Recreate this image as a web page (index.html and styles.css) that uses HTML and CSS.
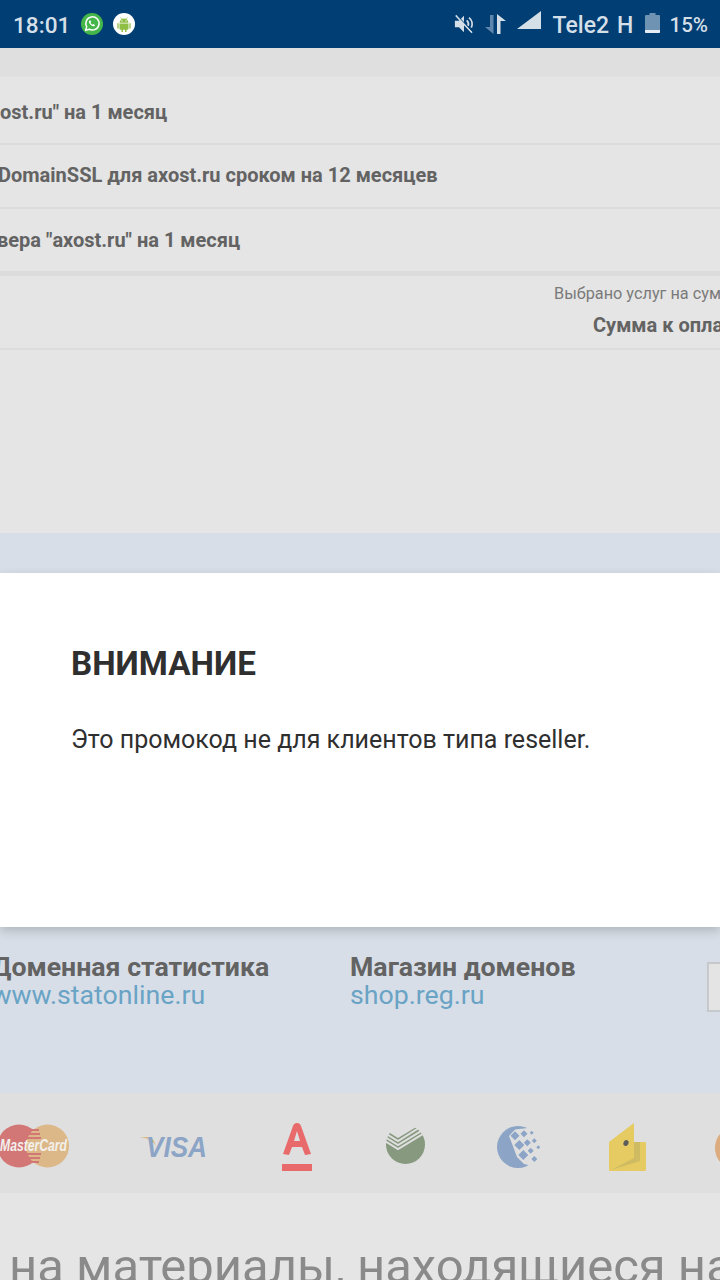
FILE: index.html
```html
<!DOCTYPE html>
<html lang="ru">
<head>
    <meta charset="UTF-8">
    <meta name="viewport" content="width=device-width, initial-scale=1.0">
    <title>Внимание</title>
    <link rel="stylesheet" href="styles.css">
</head>
<body>
    <div class="status-bar">
        <div class="status-left">
            <span class="clock">18:01</span>
            <svg class="notif notif-wa" viewBox="0 0 22 22"><circle cx="11" cy="11" r="11" fill="#45b74a"/><path d="M4.600 17.400l1.100-3.700a6.600 6.600 0 1 1 2.500 2.500z" fill="none" stroke="#fff" stroke-width="1.500" stroke-linejoin="round"/><path d="M8.600 7.400c-.9.600-.9 1.900.1 3.400 1.100 1.600 2.600 2.600 3.900 2.500.9-.1 1.500-.8 1.300-1.400l-1.600-.8-.7.7c-.9-.4-1.700-1.200-2.100-2.100l.6-.7-.7-1.700z" fill="#fff"/></svg>
            <svg class="notif notif-android" viewBox="0 0 22 22"><circle cx="11" cy="11" r="11" fill="#fff"/><path d="M6.500 9.700a4.500 4.300 0 0 1 9 0z" fill="#8fbe45"/><path d="M6.500 10.400h9v5.400a1 1 0 0 1-1 1h-1v2.200h-1.500v-2.200h-2v2.200H8.500v-2.200h-1a1 1 0 0 1-1-1z" fill="#8fbe45"/><path d="M5 10.700v4.300M17 10.700v4.300" stroke="#8fbe45" stroke-width="1.300" stroke-linecap="round"/><path d="M8.500 5.900L7.700 4.400M13.500 5.900l.8-1.500" stroke="#8fbe45" stroke-width=".7"/><circle cx="9" cy="7.900" r=".6" fill="#fff"/><circle cx="13" cy="7.900" r=".6" fill="#fff"/></svg>
        </div>
        <div class="status-right">
            <svg class="sys-icon icon-mute" width="20" height="20" viewBox="0 0 22 22"><path d="M1 7.500h4.500l5.500-5.500v18l-5.500-5.500H1z" fill="#d5dfe8"/><path d="M14 7a5.500 5.500 0 0 1 1.500 6M16.500 4a9 9 0 0 1 2.500 11" fill="none" stroke="#d5dfe8" stroke-width="2"/><path d="M2 1.500l18 19" stroke="#d5dfe8" stroke-width="2"/><path d="M3.500 1.500l18 19" stroke="#003e73" stroke-width="1"/></svg>
            <svg class="sys-icon icon-arrows" width="21" height="20" viewBox="0 0 21 20"><path d="M5 1h3.500v19L0 13h5z" fill="#5f87ad"/><path d="M12 0l9 7h-5.500v13H12z" fill="#d5dfe8"/></svg>
            <svg class="sys-icon icon-signal" width="24" height="18" viewBox="0 0 24 18"><path d="M0 18L24 0v18z" fill="#d5dfe8"/></svg>
            <span class="carrier">Tele2</span>
            <span class="net">H</span>
            <svg class="sys-icon icon-battery" width="15" height="20" viewBox="0 0 15 20"><path d="M4.500 0h6v2h3.500a1 1 0 0 1 1 1v16a1 1 0 0 1-1 1H1a1 1 0 0 1-1-1V3a1 1 0 0 1 1-1h3.500z" fill="#6f93b3"/><path d="M0 17h15v2a1 1 0 0 1-1 1H1a1 1 0 0 1-1-1z" fill="#e6ecf1"/></svg>
            <span class="level">15%</span>
        </div>
    </div>

    <div class="top-strip"></div>

    <div class="order-list">
        <div class="order-row row-a">ost.ru" на 1 месяц</div>
        <div class="order-row row-b">DomainSSL для axost.ru сроком на 12 месяцев</div>
        <div class="order-row row-c">вера "axost.ru" на 1 месяц</div>
    </div>

    <div class="summary">
        <div class="summary-line">Выбрано услуг на сумму</div>
        <div class="summary-total">Сумма к оплате</div>
    </div>

    <div class="blank"></div>
    <div class="blue-gap"></div>

    <div class="modal">
        <h2 class="modal-title">ВНИМАНИЕ</h2>
        <p class="modal-text">Это промокод не для клиентов типа reseller.</p>
    </div>

    <div class="footer-links">
        <div class="link-col col-stat">
            <div class="link-title">Доменная статистика</div>
            <a class="link-url">www.statonline.ru</a>
        </div>
        <div class="link-col col-shop">
            <div class="link-title">Магазин доменов</div>
            <a class="link-url">shop.reg.ru</a>
        </div>
        <div class="cut-box"></div>
    </div>

    <div class="payments">
        <svg class="pay pay-mc" width="72" height="44" viewBox="0 0 72 44">
            <circle cx="19" cy="22" r="21.500" fill="#d27676"/>
            <circle cx="47.500" cy="22" r="21.500" fill="#dcb888"/>
            <path d="M29 6h10M27 10h13M27 14h14M27 30h14M27 34h13M29 38h10" stroke="#d27676" stroke-width="2"/>
            <text x="0" y="27" class="mc-text" textLength="67" lengthAdjust="spacingAndGlyphs">MasterCard</text>
        </svg>
        <svg class="pay pay-visa" width="68" height="24" viewBox="0 0 68 24">
            <path d="M0 1h8q6 1 8 9Q12 3 0 1z" fill="#dcb888"/>
            <text x="6" y="21" class="visa-text" textLength="61" lengthAdjust="spacingAndGlyphs">VISA</text>
        </svg>
        <svg class="pay pay-alfa" width="32" height="48" viewBox="0 0 32 48">
            <path d="M2 31L12 3q1-3 4-3t4 3l10 28-6 1-3-8H11l-3 8zM13 18h6l-3-10z" fill="#e96a6a" fill-rule="evenodd"/>
            <rect x="1" y="41" width="30" height="7" fill="#e96a6a"/>
        </svg>
        <svg class="pay pay-sber" width="41" height="38" viewBox="0 0 41 38">
            <circle cx="20.500" cy="18.500" r="19.500" fill="#87997f"/>
            <path d="M0 0v4l13 8L33 0z" fill="#dfdfdf"/>
            <path d="M0 7l13 8L37 0M0 11l13 8L41 2M0 15l13 8L41 6" fill="none" stroke="#dfdfdf" stroke-width="2"/>
        </svg>
        <svg class="pay pay-wm" width="44" height="42" viewBox="0 0 44 42">
            <circle cx="21" cy="21" r="21" fill="#8ca5c6"/>
            <path d="M12 10l6-6.500 9-1L44 0v42l-17-4-7-7-4.500-12z" fill="#dfdfdf"/>
            <path d="M18 5.200l4.500 4.500L18 14.200l-4.500-4.500zM27 4.200l3.500 3.500-3.500 3.500-3.500-3.500zM34.700 4.700l2 2-2 2-2-2zM22.300 14l5 5-5 5-5-5zM30.300 13.200l3.500 3.500-3.500 3.500-3.500-3.500zM37.300 12.200l2.500 2.500-2.500 2.500-2.500-2.500zM26.300 24l5 5-5 5-5-5zM33.700 21.700l3 3-3 3-3-3zM41.300 19.300l2 2-2 2-2-2zM37.300 30l3 3-3 3-3-3z" fill="#8ca5c6"/>
        </svg>
        <svg class="pay pay-yandex" width="37" height="48" viewBox="0 0 37 48">
            <path d="M1 48a1 1 0 0 1-1-1V19L25 0v19h11a1 1 0 0 1 1 1v27a1 1 0 0 1-1 1z" fill="#e6cb63"/>
            <path d="M2 47l23-12V19h6v19z" fill="#cfbb62"/>
            <ellipse cx="17" cy="20" rx="2.500" ry="3" fill="#5d5d5d" transform="rotate(25 17 20)"/>
        </svg>
        <div class="pay-cut"></div>
    </div>

    <div class="notice">на материалы, находящиеся на</div>
</body>
</html>
```

FILE: styles.css
```css
html, body {
    margin: 0;
    padding: 0;
}
body {
    width: 720px;
    height: 1280px;
    overflow: hidden;
    font-family: Roboto, "Noto Sans", sans-serif;
    background-color: #e5e5e5;
}
.status-bar {
    height: 48px;
    background-color: #003e73;
    display: flex;
    justify-content: space-between;
    align-items: center;
    color: #d5dfe8;
    font-weight: 500;
}
.status-left {
    display: flex;
    align-items: center;
    padding-left: 13px;
}
.clock {
    font-size: 22.6px;
    margin: 2px 11px 0 0;
}
.notif {
    width: 22px;
    height: 22px;
}
.notif-wa {
    margin-right: 10px;
}
.status-right {
    display: flex;
    align-items: center;
    padding-right: 12px;
    font-size: 23px;
}
.sys-icon {
    flex-shrink: 0;
}
.icon-mute {
    margin-right: 11px;
}
.icon-arrows {
    margin-right: 11px;
}
.icon-signal {
    margin: 0 12px 8px 0;
}
.carrier {
    margin-top: 2px;
}
.net {
    margin: 2px 12px 0 8px;
}
.icon-battery {
    margin-bottom: 2px;
}
.level {
    font-size: 20.6px;
    margin: 2px 0 0 9px;
}
.top-strip {
    height: 28px;
    background-color: #dfdfdf;
    border-bottom: 1px solid #e1e1e1;
}
.order-row {
    display: flex;
    align-items: center;
    font-size: 20px;
    font-weight: 700;
    color: #636363;
    white-space: nowrap;
    border-bottom: 2px solid #dcdcdc;
}
.row-a {
    height: 62px;
    padding-top: 4px;
}
.row-b {
    height: 60px;
    padding-bottom: 2px;
    text-indent: -2px;
}
.row-c {
    height: 62px;
    border-bottom: none;
    text-indent: -3px;
}
.summary {
    height: 72px;
    border-top: 5px solid #dcdcdc;
    border-bottom: 2px solid #dcdcdc;
    display: flex;
    flex-direction: column;
    align-items: flex-start;
    padding-left: 554px;
    white-space: nowrap;
    overflow: hidden;
}
.summary-line {
    font-size: 16.3px;
    color: #7a7a7a;
    margin-top: 8px;
}
.summary-total {
    font-size: 20px;
    font-weight: 700;
    color: #636363;
    margin: 10px 0 0 39px;
}
.blank {
    height: 183px;
}
.blue-gap {
    height: 40px;
    background-color: #d8dee7;
}
.modal {
    position: relative;
    height: 354px;
    box-sizing: border-box;
    padding: 71px 71px 0;
    background-color: #fff;
    box-shadow: 0 4px 10px rgba(0, 0, 0, 0.18);
    color: #2f2f2f;
}
.modal-title {
    margin: 0;
    font-size: 33.2px;
    line-height: 40px;
    font-weight: 700;
}
.modal-text {
    margin: 40px 0 0;
    font-size: 25px;
    line-height: 32px;
}
.footer-links {
    height: 166px;
    background-color: #d8dee7;
    display: flex;
    align-items: flex-start;
    white-space: nowrap;
}
.link-col {
    padding-top: 26px;
    flex-shrink: 0;
}
.col-stat {
    width: 358.5px;
    margin-left: -8.5px;
}
.col-shop {
    width: 357px;
}
.link-title {
    font-size: 26.7px;
    line-height: 28px;
    font-weight: 700;
    color: #636363;
}
.link-url {
    display: block;
    font-size: 26.7px;
    line-height: 28px;
    color: #69a3c5;
}
.cut-box {
    flex-shrink: 0;
    width: 20px;
    height: 50px;
    margin-top: 35px;
    box-sizing: border-box;
    border: 2px solid #c6c9cc;
    background-color: #e4e4e4;
}
.payments {
    height: 100px;
    background-color: #dfdfdf;
    display: flex;
    align-items: flex-start;
    overflow: hidden;
}
.pay {
    flex-shrink: 0;
}
.pay-mc {
    margin-top: 31px;
}
.mc-text {
    font-family: "Liberation Sans", sans-serif;
    font-size: 16px;
    font-weight: 700;
    font-style: italic;
    fill: #f3f0ec;
}
.pay-visa {
    margin: 43px 0 0 68px;
}
.visa-text {
    font-family: "Liberation Sans", sans-serif;
    font-size: 29px;
    font-weight: 700;
    font-style: italic;
    fill: #8ca5c6;
}
.pay-alfa {
    margin: 30px 0 0 73px;
}
.pay-sber {
    margin: 33px 0 0 72px;
}
.pay-wm {
    margin: 33px 0 0 71px;
}
.pay-yandex {
    margin: 30px 0 0 68px;
}
.pay-cut {
    flex-shrink: 0;
    width: 44px;
    height: 44px;
    margin: 33px 0 0 69px;
    border-radius: 50%;
    background-color: #dcab7e;
}
.notice {
    padding-left: 9px;
    font-size: 49px;
    line-height: 87px;
    height: 87px;
    margin-top: 30px;
    color: #8a8a8a;
    white-space: nowrap;
}
```
